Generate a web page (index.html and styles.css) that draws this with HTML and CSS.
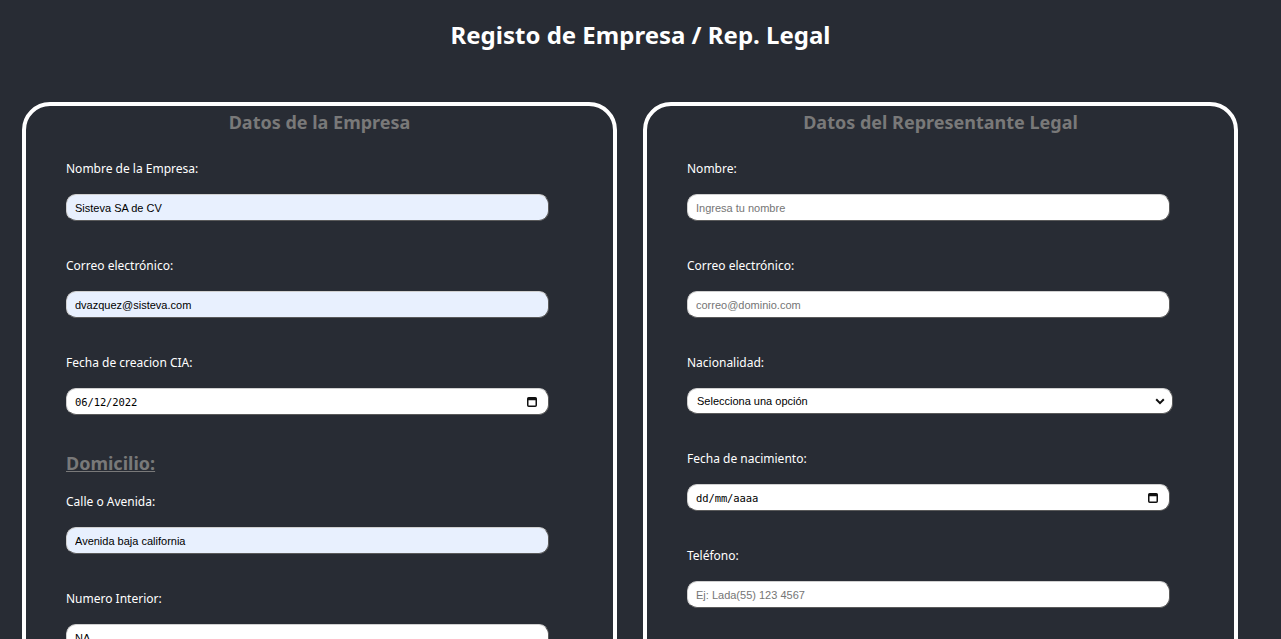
FILE: index.html
```html
<!DOCTYPE html>
<html lang="es">
<head>
<meta charset="utf-8">
<title>Registo de Empresa / Rep. Legal</title>
<link rel="stylesheet" href="styles.css">
</head>
<body>
<header class="page-header">
  <h1 class="page-title">Registo de Empresa / Rep. Legal</h1>
</header>
<main class="cards">
  <section class="card">
    <h2 class="card-title">Datos de la Empresa</h2>
    <div class="field">
      <label class="label">Nombre de la Empresa:</label>
      <input class="input filled" type="text" value="Sisteva SA de CV">
    </div>
    <div class="field">
      <label class="label">Correo electrónico:</label>
      <input class="input filled" type="text" value="dvazquez@sisteva.com">
    </div>
    <div class="field">
      <label class="label">Fecha de creacion CIA:</label>
      <div class="input date">
        <span class="date-text value">06/12/2022</span>
        <svg class="cal" width="10" height="10" viewBox="0 0 10 10"><rect x="0.75" y="0.75" width="8.5" height="8.5" rx="1" fill="none" stroke="#111" stroke-width="1.5"/><rect x="0.75" y="0.75" width="8.5" height="2.5" fill="#111"/></svg>
      </div>
    </div>
    <h3 class="section-title">Domicilio:</h3>
    <div class="field">
      <label class="label">Calle o Avenida:</label>
      <input class="input filled" type="text" value="Avenida baja california">
    </div>
    <div class="field">
      <label class="label">Numero Interior:</label>
      <input class="input" type="text" value="NA">
    </div>
    <div class="field">
      <label class="label">Numero Exterior:</label>
      <input class="input" type="text" value="">
    </div>
  </section>
  <section class="card">
    <h2 class="card-title">Datos del Representante Legal</h2>
    <div class="field">
      <label class="label">Nombre:</label>
      <input class="input" type="text" placeholder="Ingresa tu nombre">
    </div>
    <div class="field">
      <label class="label">Correo electrónico:</label>
      <input class="input" type="text" placeholder="correo@dominio.com">
    </div>
    <div class="field">
      <label class="label">Nacionalidad:</label>
      <div class="input select">
        <span class="select-text">Selecciona una opción</span>
        <svg class="chev" width="10" height="7" viewBox="0 0 10 7"><path d="M1.2 1.3 L5 5.1 L8.8 1.3" fill="none" stroke="#111" stroke-width="2"/></svg>
      </div>
    </div>
    <div class="field">
      <label class="label">Fecha de nacimiento:</label>
      <div class="input date">
        <span class="date-text">dd/mm/aaaa</span>
        <svg class="cal" width="10" height="10" viewBox="0 0 10 10"><rect x="0.75" y="0.75" width="8.5" height="8.5" rx="1" fill="none" stroke="#111" stroke-width="1.5"/><rect x="0.75" y="0.75" width="8.5" height="2.5" fill="#111"/></svg>
      </div>
    </div>
    <div class="field">
      <label class="label">Teléfono:</label>
      <input class="input" type="text" placeholder="Ej: Lada(55) 123 4567">
    </div>
    <div class="field">
      <label class="label">CURP:</label>
      <input class="input" type="text" placeholder="">
    </div>
  </section>
</main>
</body>
</html>
```
FILE: styles.css
```css
* { box-sizing: border-box; }

html, body {
  margin: 0;
  padding: 0;
  background: #282c34;
  overflow: hidden;
}

body {
  font-family: "Noto Sans", "Open Sans", sans-serif;
  color: #ffffff;
}

.page-header {
  padding-top: 19px;
  height: 102px;
}

.page-title {
  margin: 0;
  text-align: center;
  font-size: 24px;
  line-height: 32px;
  font-weight: 700;
  color: #ffffff;
}

.cards {
  display: flex;
  gap: 26px;
  padding-left: 22px;
  align-items: flex-start;
}

.card {
  width: 595px;
  border: 4px solid #ffffff;
  border-radius: 28px;
  padding: 4px 40px 60px;
}

.card-title {
  margin: 0 0 25px;
  text-align: center;
  font-size: 18px;
  line-height: 25px;
  font-weight: 700;
  color: #797979;
}

.field {
  display: flex;
  flex-direction: column;
  gap: 17px;
  margin-bottom: 36px;
}

.label {
  font-size: 12px;
  line-height: 17px;
  color: #ffffff;
}

.input {
  width: 483px;
  height: 27px;
  border-radius: 10px;
  border: 1px solid;
  border-color: #d0d0d0 #5a5a5a #5a5a5a #d0d0d0;
  background: #ffffff;
  padding: 0 8px;
  font-family: "Liberation Sans", Arial, sans-serif;
  font-size: 11px;
  color: #000000;
  outline: none;
}

.input::placeholder { color: #757575; }

.input.filled { background: #e8f0fe; }

.date {
  display: flex;
  align-items: center;
  justify-content: space-between;
  padding: 0 11px 0 8px;
}

.date-text {
  font-family: "DejaVu Sans Mono", "Liberation Mono", monospace;
  font-size: 10.5px;
  color: #000000;
  letter-spacing: -0.1px;
}

.select {
  width: 486px;
  height: 26px;
  display: flex;
  align-items: center;
  justify-content: space-between;
  padding: 0 7px 0 9px;
}

.select-text {
  font-size: 11px;
  color: #000000;
}

.section-title {
  margin: 0 0 17px;
  font-size: 18px;
  line-height: 25px;
  font-weight: 700;
  color: #797979;
  text-decoration: underline;
}
```
